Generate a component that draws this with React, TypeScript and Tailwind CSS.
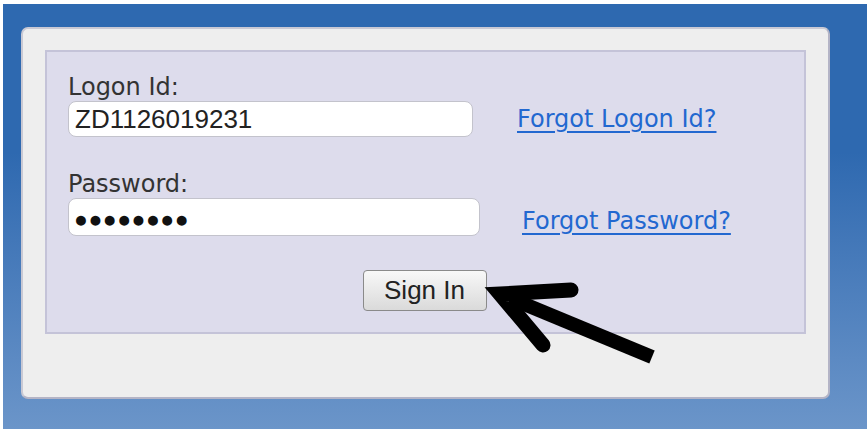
import React from 'react';

const labelFont = { fontFamily: '"DejaVu Sans", Verdana, sans-serif' };
const fieldFont = { fontFamily: '"Liberation Sans", Arial, sans-serif' };

// Thick black pointer drawn over the form, aimed at the sign-in button
const PointerArrow: React.FC = () => (
  <svg
    className="absolute left-0 top-0 pointer-events-none"
    width={867}
    height={429}
    viewBox="0 0 867 429"
  >
    <path d="M652 357 L512 299" stroke="#000" strokeWidth={14} strokeLinecap="butt" fill="none" />
    <path
      d="M571 290 L500 294 L543 345"
      stroke="#000"
      strokeWidth={15}
      strokeLinecap="round"
      strokeLinejoin="miter"
      fill="none"
    />
  </svg>
);

const App: React.FC = () => {
  return (
    <div className="relative w-[867px] h-[429px] bg-white pt-[4px] pl-[3px] overflow-hidden">
      <div className="w-full h-full bg-linear-to-b from-[#2e69b0] from-35% to-[#6b95c9] pl-[18px] pt-[23px]">
        {/* outer card */}
        <div className="w-[809px] h-[372px] rounded-[7px] bg-[#eeeeee] border-2 border-[#c9c9d4] border-r-[#b4b4c6] border-b-[#b4b4c6] pl-[22px] pt-[21px]">
          {/* lavender form panel */}
          <div
            className="w-[761px] h-[284px] bg-[#dddcec] border-2 border-[#c4c3d8] pl-[21px] pt-[21px] flex flex-col"
            style={labelFont}
          >
            <label className="text-[24px] leading-[28px] text-[#333333]">Logon Id:</label>
            <div className="flex items-center">
              <input
                type="text"
                defaultValue="ZD1126019231"
                className="w-[405px] h-[36px] rounded-[8px] bg-white border border-[#c3c3cc] px-[6px] text-[26px] text-[#222222] outline-none"
                style={fieldFont}
              />
              <a href="#" className="ml-[44px] text-[24px] leading-[28px] text-[#2268d0] underline underline-offset-[4px]">
                Forgot Logon Id?
              </a>
            </div>

            <label className="mt-[33px] text-[24px] leading-[28px] text-[#333333]">Password:</label>
            <div className="flex items-center">
              {/* masked value shown with round bullets */}
              <input
                type="text"
                readOnly
                value="●●●●●●●●"
                className="w-[412px] h-[38px] rounded-[8px] bg-white border border-[#c3c3cc] pl-[5px] pt-[4px] text-[23px] tracking-[0.5px] text-[#111111] outline-none"
                style={fieldFont}
              />
              <a href="#" className="ml-[42px] mt-[8px] text-[24px] leading-[28px] text-[#2268d0] underline underline-offset-[4px]">
                Forgot Password?
              </a>
            </div>

            <div className="flex justify-center pr-[23px] mt-[34px]">
              <button
                className="w-[124px] h-[41px] rounded-[4px] border border-[#8a8a8a] bg-linear-to-b from-[#f8f8f8] to-[#dadada] text-[26px] text-[#222222]"
                style={fieldFont}
              >
                Sign In
              </button>
            </div>
          </div>
        </div>
      </div>
      <PointerArrow />
    </div>
  );
};

export default App;
